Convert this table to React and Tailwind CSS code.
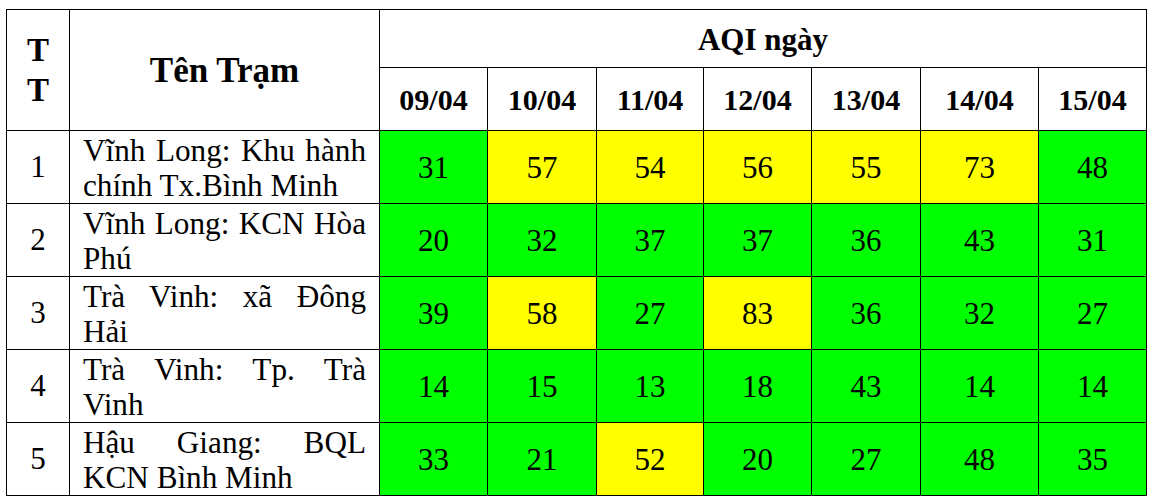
const dates = ['09/04', '10/04', '11/04', '12/04', '13/04', '14/04', '15/04'];

const rows = [
  { tt: 1, name: 'Vĩnh Long: Khu hành chính Tx.Bình Minh', values: [31, 57, 54, 56, 55, 73, 48] },
  { tt: 2, name: 'Vĩnh Long: KCN Hòa Phú', values: [20, 32, 37, 37, 36, 43, 31] },
  { tt: 3, name: 'Trà Vinh: xã Đông Hải', values: [39, 58, 27, 83, 36, 32, 27] },
  { tt: 4, name: 'Trà Vinh: Tp. Trà Vinh', values: [14, 15, 13, 18, 43, 14, 14] },
  { tt: 5, name: 'Hậu Giang: BQL KCN Bình Minh', values: [33, 21, 52, 20, 27, 48, 35] },
];

function AqiCell({ value }) {
  const bg = value > 50 ? 'bg-[#ffff00]' : 'bg-[#00ff00]';
  return (
    <td className={`${bg} border border-black text-center align-middle text-[31px] pt-[2px]`}>
      {value}
    </td>
  );
}

function App() {
  return (
    <div className="w-[1154px] h-[503px] bg-white pt-[9px] pl-[6px] font-['Liberation_Serif','Times_New_Roman',serif] text-black">
      <table className="table-fixed border-collapse w-[1140px]">
        <colgroup>
          <col className="w-[63px]" />
          <col className="w-[310px]" />
          <col className="w-[108px]" />
          <col className="w-[109px]" />
          <col className="w-[107px]" />
          <col className="w-[108px]" />
          <col className="w-[109px]" />
          <col className="w-[118px]" />
          <col className="w-[108px]" />
        </colgroup>
        <thead>
          <tr className="h-[58px]">
            <th rowSpan={2} className="border border-black font-bold text-[33px] leading-[40px] align-middle">
              <span className="block w-[24px] mx-auto break-all">TT</span>
            </th>
            <th rowSpan={2} className="border border-black font-bold text-[35px] align-middle pt-[2px]">
              Tên Trạm
            </th>
            <th colSpan={7} className="border border-black font-bold text-[31px] align-middle pt-[3px]">
              AQI ngày
            </th>
          </tr>
          <tr className="h-[63px]">
            {dates.map((d) => (
              <th key={d} className="border border-black font-bold text-[30px] align-middle">
                {d}
              </th>
            ))}
          </tr>
        </thead>
        <tbody>
          {rows.map((row) => (
            <tr key={row.tt} className="h-[73px]">
              <td className="border border-black text-center align-middle text-[31px]">{row.tt}</td>
              <td className="border border-black px-[13px] pt-[3px] align-middle text-[31.2px] leading-[34.5px] text-justify">
                {row.name}
              </td>
              {row.values.map((v, i) => (
                <AqiCell key={i} value={v} />
              ))}
            </tr>
          ))}
        </tbody>
      </table>
    </div>
  );
}

export default App;
